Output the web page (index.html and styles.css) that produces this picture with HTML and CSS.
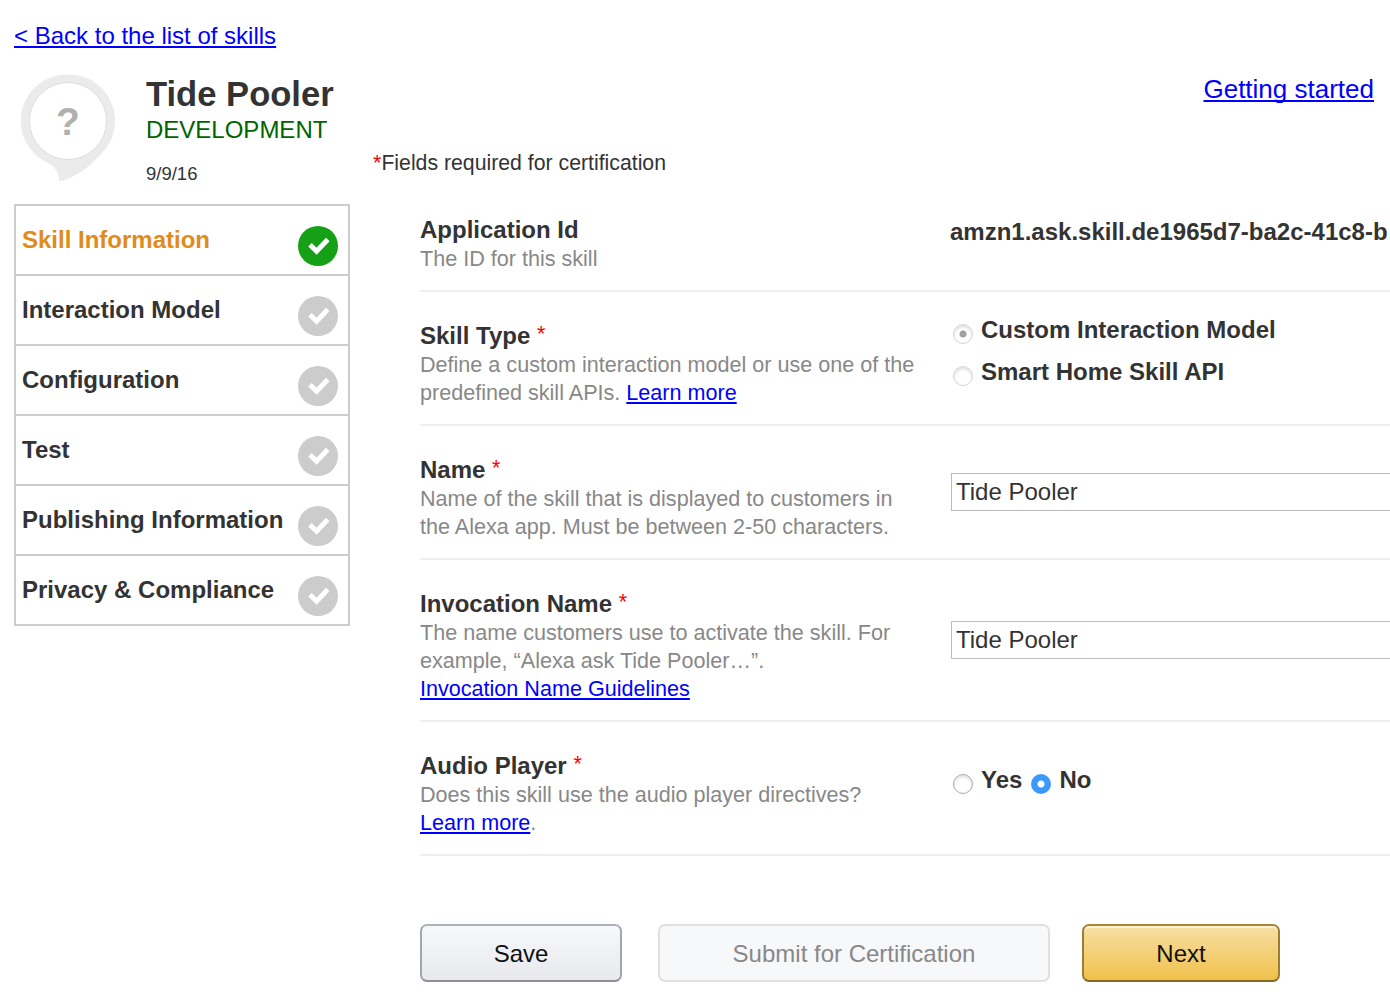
FILE: index.html
```html
<!DOCTYPE html>
<html lang="en">
<head>
<meta charset="utf-8">
<title>Tide Pooler</title>
<link rel="stylesheet" href="styles.css">
</head>
<body>
<svg class="defs" width="0" height="0" aria-hidden="true">
  <symbol id="check" viewBox="0 0 40 40">
    <circle cx="20" cy="20" r="20" fill="currentColor"/>
    <path d="M12 18.8l6.6 6.4L29.8 13.6" fill="none" stroke="#fff" stroke-width="5"/>
  </symbol>
</svg>
<nav class="back"><a href="#">&lt; Back to the list of skills</a></nav>
<div class="columns">
  <aside class="side">
    <header class="skill">
      <svg class="skill-icon" width="94" height="110" viewBox="0 0 94 110">
        <path d="M47 0.500A46.300 46.300 0 0 0 27 89Q38 94 38.500 107.500Q62 101 80 80A46.300 46.300 0 0 0 47 0.500Z" fill="#ebebeb"/>
        <circle cx="47" cy="47" r="38.500" fill="#fff" stroke="#dedede"/>
        <text x="47" y="61" text-anchor="middle" class="question">?</text>
      </svg>
      <div class="skill-text">
        <h1>Tide Pooler</h1>
        <p class="status">DEVELOPMENT</p>
        <p class="date">9/9/16</p>
      </div>
    </header>
    <ul class="steps">
      <li class="step active"><span>Skill Information</span><svg class="badge"><use href="#check"/></svg></li>
      <li class="step"><span>Interaction Model</span><svg class="badge"><use href="#check"/></svg></li>
      <li class="step"><span>Configuration</span><svg class="badge"><use href="#check"/></svg></li>
      <li class="step"><span>Test</span><svg class="badge"><use href="#check"/></svg></li>
      <li class="step"><span>Publishing Information</span><svg class="badge"><use href="#check"/></svg></li>
      <li class="step"><span>Privacy &amp; Compliance</span><svg class="badge"><use href="#check"/></svg></li>
    </ul>
  </aside>
  <main class="main">
    <div class="help"><a href="#">Getting started</a></div>
    <p class="required"><span class="star">*</span>Fields required for certification</p>
    <form class="form">
      <section class="row">
        <div class="about"><h2>Application Id</h2><p>The ID for this skill</p></div>
        <div class="field app-id">amzn1.ask.skill.de1965d7-ba2c-41c8-b</div>
      </section>
      <section class="row">
        <div class="about"><h2>Skill Type <span class="star">*</span></h2><p>Define a custom interaction model or use one of the<br>predefined skill APIs. <a href="#">Learn more</a></p></div>
        <div class="field types">
          <label><input type="radio" name="type" checked disabled>Custom Interaction Model</label>
          <label><input type="radio" name="type" disabled>Smart Home Skill API</label>
        </div>
      </section>
      <section class="row">
        <div class="about"><h2>Name <span class="star">*</span></h2><p>Name of the skill that is displayed to customers in<br>the Alexa app. Must be between 2-50 characters.</p></div>
        <div class="field centered"><input class="text" type="text" value="Tide Pooler"></div>
      </section>
      <section class="row">
        <div class="about"><h2>Invocation Name <span class="star">*</span></h2><p>The name customers use to activate the skill. For<br>example, “Alexa ask Tide Pooler…”.<br><a href="#">Invocation Name Guidelines</a></p></div>
        <div class="field centered"><input class="text" type="text" value="Tide Pooler"></div>
      </section>
      <section class="row">
        <div class="about"><h2>Audio Player <span class="star">*</span></h2><p>Does this skill use the audio player directives?<br><a href="#">Learn more</a>.</p></div>
        <div class="field audio">
          <label><input type="radio" name="audio">Yes</label>
          <label><input type="radio" name="audio" checked>No</label>
        </div>
      </section>
      <div class="actions">
        <button class="btn save" type="button">Save</button>
        <button class="btn submit" type="button" disabled>Submit for Certification</button>
        <button class="btn next" type="button">Next</button>
      </div>
    </form>
  </main>
</div>
</body>
</html>
```
FILE: styles.css
```css
* { box-sizing: border-box; }
body {
  margin: 0;
  height: 1000px;
  overflow: hidden;
  background: #fff;
  color: #333;
  font-family: "Liberation Sans", Arial, sans-serif;
  font-size: 24px;
}
h1, h2, p, ul { margin: 0; padding: 0; }
a {
  color: #00f;
  text-decoration: underline;
  text-decoration-thickness: 2px;
  text-underline-offset: 2px;
  text-decoration-skip-ink: none;
}
.defs { display: block; height: 0; }
.back { height: 72px; padding: 22px 0 0 14px; line-height: 28px; }
.columns { display: flex; }
.side { flex: 0 0 336px; margin-left: 14px; }
.skill { display: flex; height: 132px; }
.skill-icon { flex: none; margin: 2px 31px 0 7px; }
.question { font: bold 39px "Liberation Sans", Arial, sans-serif; fill: #b0b0b0; }
.skill-text { white-space: nowrap; }
h1 { font-size: 34.600px; line-height: 44px; }
.status { color: #006400; line-height: 28px; }
.date { margin-top: 18px; font-size: 18.500px; line-height: 24px; }
.steps { list-style: none; border: 2px solid #ccc; border-bottom: 0; }
.step {
  display: flex;
  justify-content: space-between;
  height: 70px;
  padding: 20px 10px 0 6px;
  border-bottom: 2px solid #ccc;
  font-weight: bold;
  line-height: 28px;
  white-space: nowrap;
}
.badge { flex: none; width: 40px; height: 40px; color: #ccc; }
.active { color: #e18b1b; }
.active .badge { color: #16a016; }
.main { flex: 1; min-width: 0; padding-left: 23px; }
.help { height: 76px; padding: 1px 16px 0 0; text-align: right; font-size: 26px; line-height: 32px; }
.required { height: 38px; font-size: 21.250px; line-height: 30px; }
.star { color: #f00; font-weight: normal; font-size: 21.500px; line-height: 0; }
.form { padding-left: 47px; }
.row { display: flex; padding: 30px 0 17px; border-bottom: 2px solid #eee; }
.about { flex: 0 0 531px; white-space: nowrap; }
.about h2 { height: 29px; font-size: 24px; line-height: 28px; }
.about .star { vertical-align: 3px; }
.about p { color: #888; font-size: 21.590px; line-height: 28px; }
.field { flex: 1; min-width: 0; font-weight: bold; white-space: nowrap; line-height: 28px; }
.app-id { padding-top: 2px; margin-left: -1px; }
.field label { display: flex; }
.types { display: flex; flex-direction: column; gap: 14px; margin-top: -6px; }
.audio { display: flex; gap: 9px; padding-top: 14px; }
.centered { display: flex; align-items: center; padding-bottom: 13px; }
input[type="radio"] {
  appearance: none;
  flex: none;
  width: 20px;
  height: 20px;
  margin: 8px 8px 0 2px;
  border: 1px solid #aaa;
  border-radius: 50%;
  background: #fff;
  box-shadow: inset 0 2px 3px #0002;
}
input[type="radio"]:disabled { border-color: #d5d5d5; }
input[type="radio"]:disabled:checked { background: radial-gradient(circle, #a0a0a0 3px, #fff 4px); }
.audio input[type="radio"]:checked {
  border: 0;
  margin-left: 0;
  background: radial-gradient(circle, #fff 3px, #3b99fc 4px);
  box-shadow: none;
}
.text {
  width: 100%;
  height: 38px;
  padding: 0 4px;
  border: 1px solid #bbb;
  border-right: 0;
  border-radius: 0;
  color: #333;
  font: 24px "Liberation Sans", Arial, sans-serif;
}
.actions { display: flex; padding-top: 68px; }
.btn {
  height: 58px;
  padding: 2px 0 0;
  border: 2px solid;
  border-radius: 7px;
  color: #111;
  font: 24px "Liberation Sans", Arial, sans-serif;
}
.save {
  width: 202px;
  margin-right: 36px;
  border-color: #adb1b8 #a2a6ac #8d9096;
  background: linear-gradient(#f7f8fa, #e7e9ec);
}
.submit { width: 392px; margin-right: 32px; border-color: #e0e0e0; background: #f7f8fa; color: #888; }
.next {
  width: 198px;
  border-color: #a88734 #9c7e31 #846a29;
  background: linear-gradient(#f7dfa5, #f0c14b);
  box-shadow: inset 0 2px 0 #fbf0d3;
}
```
